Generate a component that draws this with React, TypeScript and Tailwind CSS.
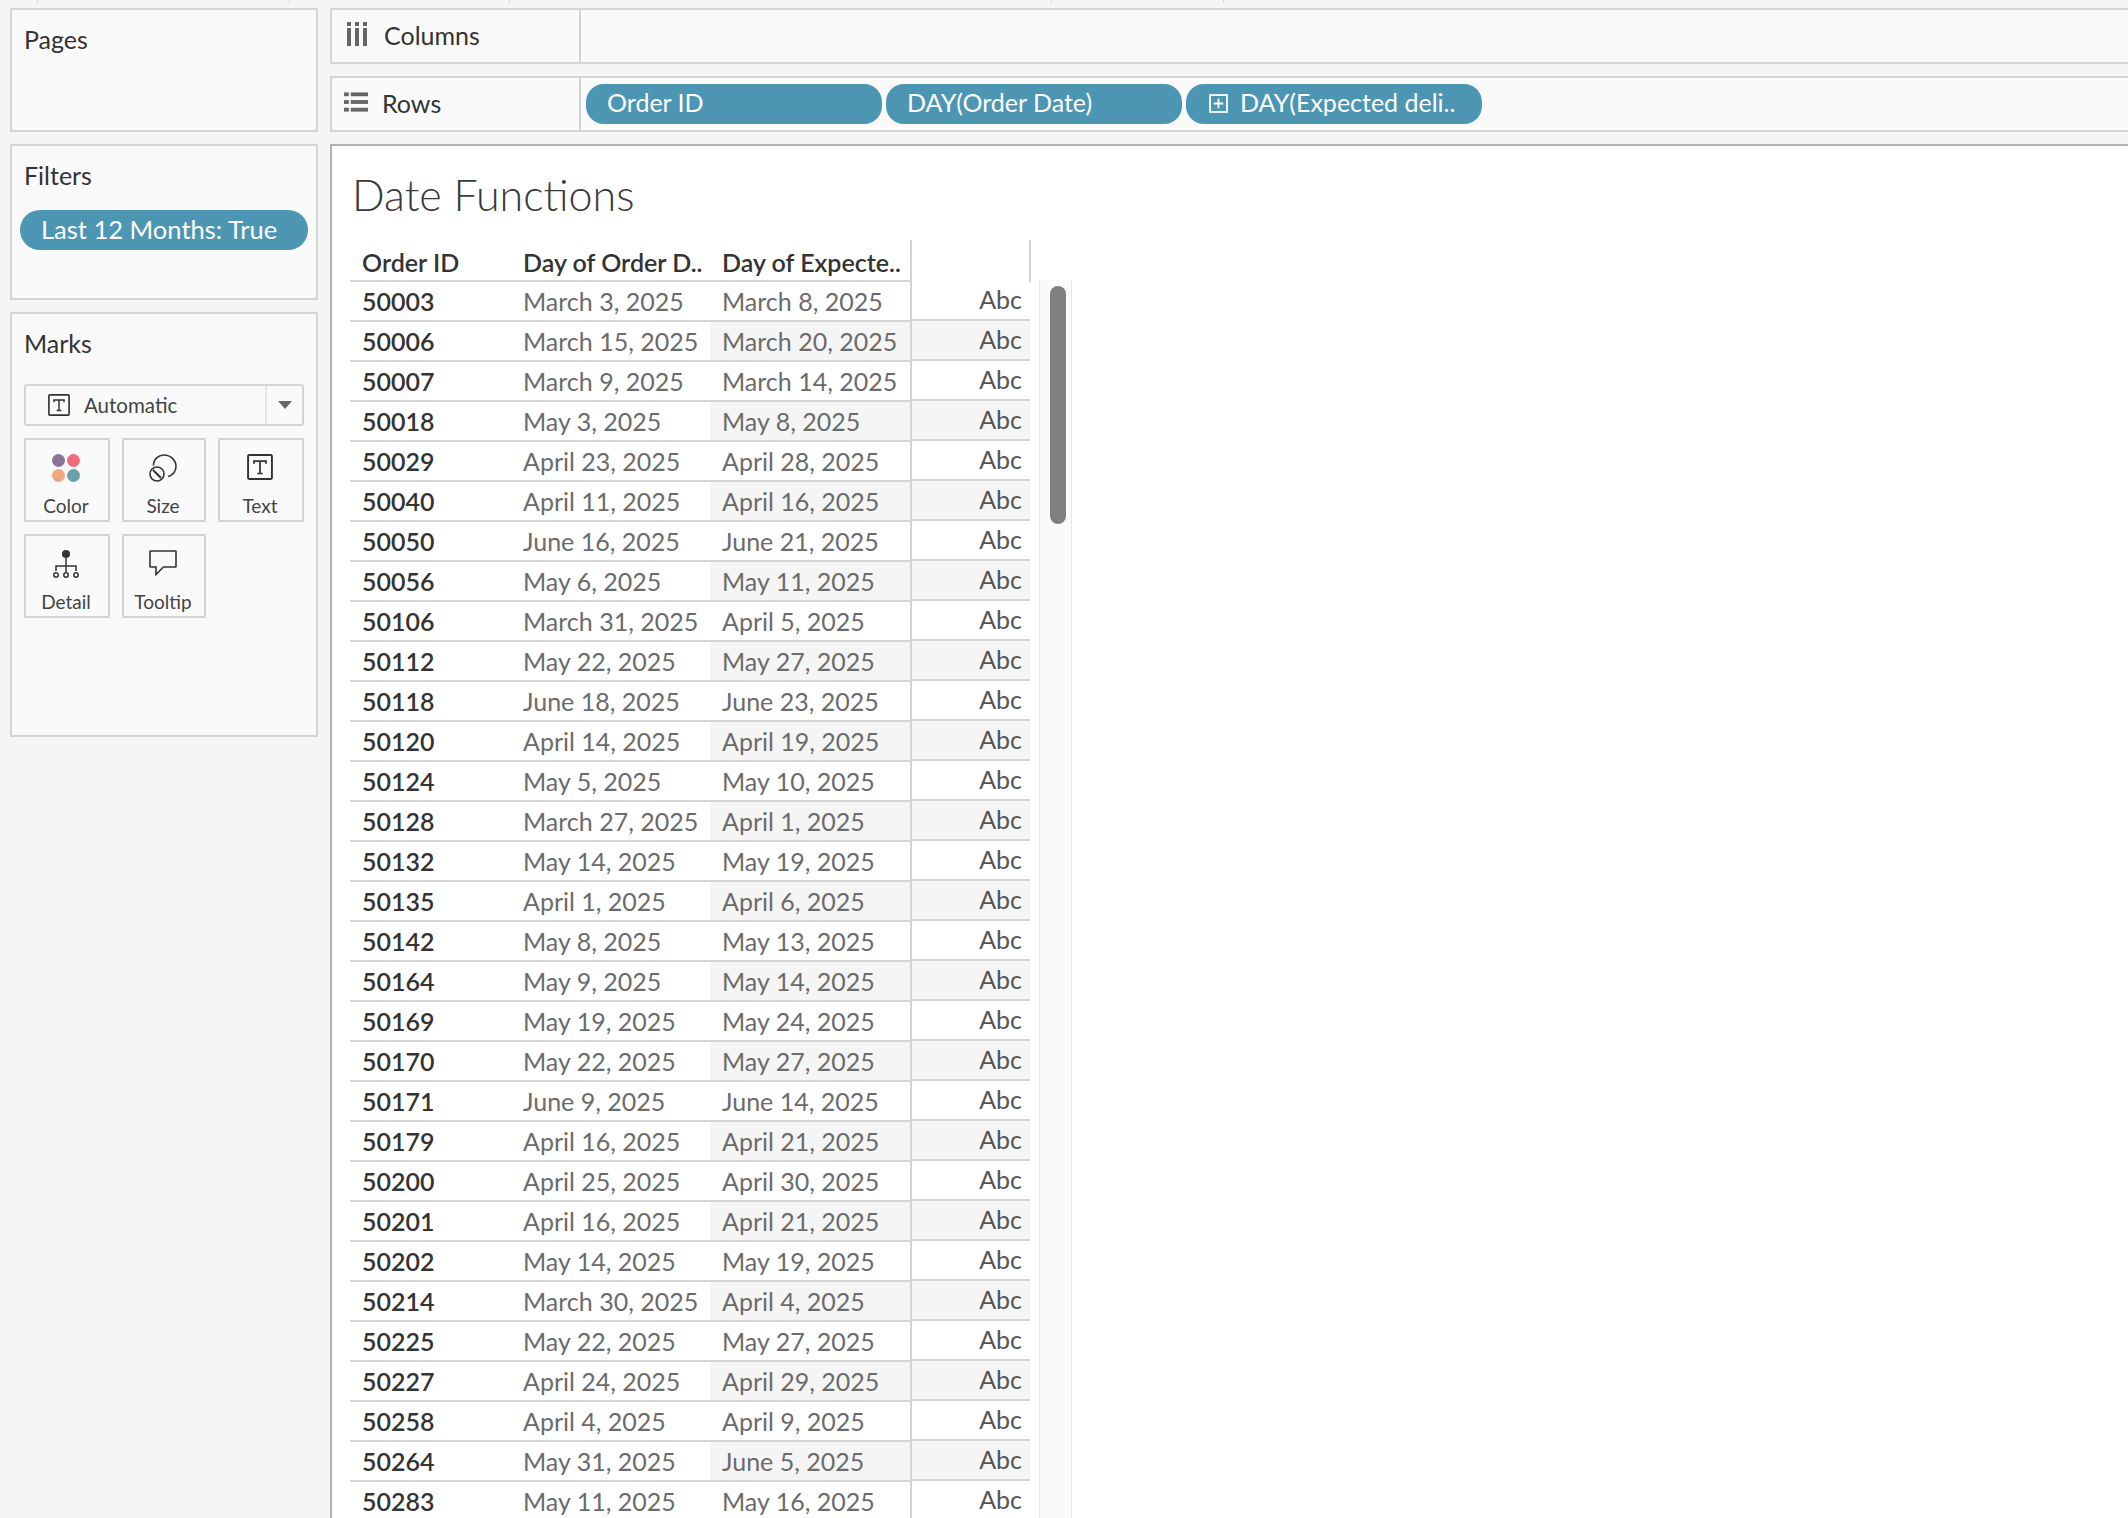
const rows: [string, string, string][] = [
  ["50003", "March 3, 2025", "March 8, 2025"],
  ["50006", "March 15, 2025", "March 20, 2025"],
  ["50007", "March 9, 2025", "March 14, 2025"],
  ["50018", "May 3, 2025", "May 8, 2025"],
  ["50029", "April 23, 2025", "April 28, 2025"],
  ["50040", "April 11, 2025", "April 16, 2025"],
  ["50050", "June 16, 2025", "June 21, 2025"],
  ["50056", "May 6, 2025", "May 11, 2025"],
  ["50106", "March 31, 2025", "April 5, 2025"],
  ["50112", "May 22, 2025", "May 27, 2025"],
  ["50118", "June 18, 2025", "June 23, 2025"],
  ["50120", "April 14, 2025", "April 19, 2025"],
  ["50124", "May 5, 2025", "May 10, 2025"],
  ["50128", "March 27, 2025", "April 1, 2025"],
  ["50132", "May 14, 2025", "May 19, 2025"],
  ["50135", "April 1, 2025", "April 6, 2025"],
  ["50142", "May 8, 2025", "May 13, 2025"],
  ["50164", "May 9, 2025", "May 14, 2025"],
  ["50169", "May 19, 2025", "May 24, 2025"],
  ["50170", "May 22, 2025", "May 27, 2025"],
  ["50171", "June 9, 2025", "June 14, 2025"],
  ["50179", "April 16, 2025", "April 21, 2025"],
  ["50200", "April 25, 2025", "April 30, 2025"],
  ["50201", "April 16, 2025", "April 21, 2025"],
  ["50202", "May 14, 2025", "May 19, 2025"],
  ["50214", "March 30, 2025", "April 4, 2025"],
  ["50225", "May 22, 2025", "May 27, 2025"],
  ["50227", "April 24, 2025", "April 29, 2025"],
  ["50258", "April 4, 2025", "April 9, 2025"],
  ["50264", "May 31, 2025", "June 5, 2025"],
  ["50283", "May 11, 2025", "May 16, 2025"],
];

function TextIcon({ size }: { size: number }) {
  return (
    <svg width={size} height={size} viewBox="0 0 24 24" fill="none" stroke="#333" strokeWidth="1.8">
      <rect x="1" y="1" width="22" height="22" rx="1" />
      <path d="M6.5 9V6.5h11V9M12 6.5V18M9.5 18h5" strokeWidth="1.6" />
    </svg>
  );
}

function ColorIcon() {
  return (
    <svg width="28" height="28" viewBox="0 0 28 28">
      <circle cx="6.5" cy="6.5" r="6.5" fill="#8c7398" />
      <circle cx="21.5" cy="6.5" r="6.5" fill="#f26b7c" />
      <circle cx="6.5" cy="21.5" r="6.5" fill="#f2a77a" />
      <circle cx="21.5" cy="21.5" r="6.5" fill="#6a9fae" />
    </svg>
  );
}

function SizeIcon() {
  return (
    <svg width="28" height="28" viewBox="0 0 28 28" fill="none" stroke="#333" strokeWidth="1.6">
      <path d="M4.500 11.500C4.500 5 9.500 1 15 1c6.500 0 12 5 12 11.500 0 5-3.500 9-8 10" />
      <circle cx="8" cy="20" r="7" />
      <path d="M4 16l8 8" strokeWidth="2" />
    </svg>
  );
}

function DetailIcon() {
  return (
    <svg width="26" height="28" viewBox="0 0 26 28" fill="none" stroke="#333" strokeWidth="1.500">
      <circle cx="13" cy="4" r="4" fill="#333" stroke="none" />
      <path d="M13 8v14M3 21v-5h20v5" />
      <circle cx="3" cy="25" r="2.200" />
      <circle cx="13" cy="25" r="2.200" />
      <circle cx="23" cy="25" r="2.200" />
    </svg>
  );
}

function TooltipIcon() {
  return (
    <svg width="28" height="26" viewBox="0 0 28 26" fill="none" stroke="#333" strokeWidth="1.600">
      <path d="M1.500 1h25a.5.5 0 0 1 .5.5V16.500a.5.5 0 0 1-.5.5H14.500L7 24.500V17H1.500a.5.5 0 0 1-.5-.5V1.500a.5.5 0 0 1 .5-.5z" />
    </svg>
  );
}

function MarkCard({ label, icon }: { label: string; icon: React.ReactNode }) {
  return (
    <div className="flex h-[84px] flex-col items-center border-2 border-[#d4d4d4] bg-[#fafafa] pr-[2px]">
      <div className="h-[43px] pt-[14px]">{icon}</div>
      <span className="mt-3 text-[19px] leading-[22px] text-[#444]">{label}</span>
    </div>
  );
}

function Pill({ children }: { children: React.ReactNode }) {
  return (
    <div className="flex h-10 w-[296px] items-center rounded-[18px] bg-[#4c96b4] pb-[2px] pl-[21px] text-[25px] text-white">
      {children}
    </div>
  );
}

export default function App() {
  return (
    <div className="h-[1518px] w-[2128px] overflow-hidden bg-[#f5f5f5] text-[#333] [font-family:Lato,sans-serif]">
      <div className="relative h-2">
        {[37, 289, 509, 1051, 1223].map((x) => (
          <span key={x} className="absolute top-0 h-[3px] w-px bg-[#d4d4d4]" style={{ left: x }} />
        ))}
      </div>
      <div className="flex items-start gap-3 pl-[10px]">
        <aside className="flex w-[308px] flex-col gap-3">
          <section className="h-[124px] border-2 border-[#d4d4d4] bg-[#fafafa] pl-3 pt-[14px] text-[25px] leading-[30px]">
            Pages
          </section>
          <section className="h-[156px] border-2 border-[#d4d4d4] bg-[#fafafa] pt-[14px] text-[25px] leading-[30px]">
            <div className="pl-3">Filters</div>
            <div className="mx-2 mt-[20px] flex h-10 items-center rounded-[20px] bg-[#4c96b4] pb-[2px] pl-[21px] text-[25.500px] text-white">
              Last 12 Months: True
            </div>
          </section>
          <section className="h-[425px] border-2 border-[#d4d4d4] bg-[#fafafa] px-3 pt-[14px]">
            <div className="text-[25px] leading-[30px]">Marks</div>
            <div className="mt-[26px] flex h-[42px] items-center rounded-[3px] border-2 border-[#d4d4d4]">
              <div className="flex flex-1 items-center gap-[14px] pl-[22px] text-[20.500px] text-[#444]">
                <TextIcon size={22} />
                Automatic
              </div>
              <div className="flex h-full w-[37px] items-center justify-center border-l-2 border-[#e4e4e4]">
                <span className="h-0 w-0 border-x-[7px] border-t-[8px] border-x-transparent border-t-[#666]" />
              </div>
            </div>
            <div className="mt-3 grid grid-cols-[86px_84px_86px] gap-3">
              <MarkCard label="Color" icon={<ColorIcon />} />
              <MarkCard label="Size" icon={<SizeIcon />} />
              <MarkCard label="Text" icon={<TextIcon size={26} />} />
              <MarkCard label="Detail" icon={<DetailIcon />} />
              <MarkCard label="Tooltip" icon={<TooltipIcon />} />
            </div>
          </section>
        </aside>

        <main className="flex w-[1800px] flex-col gap-3">
          <div className="flex h-14 border-2 border-r-0 border-[#d4d4d4] bg-[#fafafa]">
            <div className="flex w-[249px] items-center gap-4 border-r-2 border-[#d4d4d4] pl-[14px] text-[25px]">
              <svg className="mb-1" width="22" height="24" viewBox="0 0 22 24" fill="#666">
                <rect x="1" y="0" width="4" height="4" />
                <rect x="1" y="6" width="4" height="18" />
                <rect x="9" y="0" width="4" height="4" />
                <rect x="9" y="6" width="4" height="18" />
                <rect x="17" y="0" width="4" height="4" />
                <rect x="17" y="6" width="4" height="18" />
              </svg>
              Columns
            </div>
          </div>
          <div className="flex h-14 border-2 border-r-0 border-[#d4d4d4] bg-[#fafafa]">
            <div className="flex w-[249px] items-center gap-[14px] border-r-2 border-[#d4d4d4] pl-3 text-[25px]">
              <svg className="mb-1" width="24" height="20" viewBox="0 0 25 20" fill="#666">
                <rect x="0" y="0" width="5" height="4" />
                <rect x="7" y="0" width="18" height="4" />
                <rect x="0" y="8" width="5" height="4" />
                <rect x="7" y="8" width="18" height="4" />
                <rect x="0" y="16" width="5" height="4" />
                <rect x="7" y="16" width="18" height="4" />
              </svg>
              Rows
            </div>
            <div className="flex items-center gap-1 pl-[5px]">
              <Pill>Order ID</Pill>
              <Pill>DAY(Order Date)</Pill>
              <Pill>
                <svg className="ml-[2px] mr-3 shrink-0" width="19" height="19" viewBox="0 0 18 18" fill="none" stroke="#fff" strokeWidth="1.700">
                  <rect x="1" y="1" width="16" height="16" />
                  <path d="M9 4.500v9M4.500 9h9" />
                </svg>
                DAY(Expected deli..
              </Pill>
            </div>
          </div>
          <div className="border-l-2 border-t-2 border-[#b0b0b0] bg-white pl-[18px]">
            <h1 className="pl-[2px] pt-6 text-[43px] font-light leading-[50px] text-[#3a3a3a]">Date Functions</h1>
            <div className="mt-[20px] flex">
              <div className="w-[681px]">
                <div className="flex h-[42px] items-center text-[25px] font-semibold leading-none">
                  <div className="flex w-[161px] items-center self-stretch border-b-2 border-[#d4d4d4] pl-3 pt-1">Order ID</div>
                  <div className="flex w-[199px] items-center self-stretch border-b-2 border-[#d4d4d4] pl-3 pt-1">Day of Order D..</div>
                  <div className="flex w-[200px] items-center self-stretch border-b-2 border-[#d4d4d4] pl-3 pt-1">Day of Expecte..</div>
                  <div className="w-[121px] self-stretch border-x-2 border-[#d4d4d4]" />
                </div>
                {rows.map(([id, ordered, expected], i) => (
                  <div key={id} className="flex h-10 text-[25px] leading-none">
                    <div className="flex w-[161px] items-center border-b-2 border-[#d4d4d4] pl-3 font-semibold">{id}</div>
                    <div className="flex w-[199px] items-center border-b-2 border-[#d4d4d4] pl-3 text-[#6b6b6b]">{ordered}</div>
                    <div className={`flex w-[200px] items-center border-b-2 border-[#d4d4d4] pl-3 text-[#6b6b6b] ${i % 2 ? "bg-[#f5f5f5]" : ""}`}>
                      {expected}
                    </div>
                    <div className={`-mt-px flex h-10 w-[120px] items-center justify-end border-b-2 border-l-2 border-[#d4d4d4] pb-[2px] pr-2 text-[#555] ${i % 2 ? "bg-[#f5f5f5]" : ""}`}>
                      Abc
                    </div>
                  </div>
                ))}
              </div>
              <div className="ml-2 mt-10 h-[1300px] w-[33px] border-x border-[#e8e8e8] bg-[#fafafa] pl-[10px] pt-[6px]">
                <div className="h-[238px] w-4 rounded-full bg-[#808080]" />
              </div>
            </div>
          </div>
        </main>
      </div>
    </div>
  );
}
